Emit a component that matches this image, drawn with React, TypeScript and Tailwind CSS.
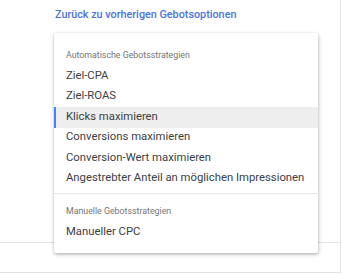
import React from "react";

const items = [
  "Ziel-CPA",
  "Ziel-ROAS",
  "Klicks maximieren",
  "Conversions maximieren",
  "Conversion-Wert maximieren",
  "Angestrebter Anteil an möglichen Impressionen",
];

export default function App() {
  return (
    <div
      className="relative w-[341px] h-[273px] bg-white border-r border-b border-[#e3e3e3] overflow-hidden"
      style={{ fontFamily: "Roboto, 'Liberation Sans', sans-serif" }}
    >
      <div className="pl-[55px] pt-[7px] text-[10.8px] leading-[16px] font-medium text-[#4a73e0]">
        Zurück zu vorherigen Gebotsoptionen
      </div>
      <div className="mt-[219px] border-t border-[#e3e3e3]" />

      <div className="absolute left-[54px] top-[33px] w-[264px] bg-white rounded-[2px] shadow-[0_1px_3px_rgba(0,0,0,0.25),1px_2px_5px_rgba(0,0,0,0.12)]">
        <div className="pt-[15px] pb-[2px]">
          <div className="pl-[12px] h-[14px] leading-[14px] text-[8.8px] text-[#757575]">
            Automatische Gebotsstrategien
          </div>
          <div className="mt-[4px]">
            {items.map((t, i) => (
              <div
                key={t}
                className={
                  i === 2
                    ? "h-[20.5px] flex items-center pl-[10px] text-[11.3px] text-[#3c4043] bg-[#eeeeee] border-l-2 border-[#4285f4]"
                    : "h-[20.5px] flex items-center pl-[12px] text-[11.3px] text-[#3c4043]"
                }
              >
                {t}
              </div>
            ))}
          </div>
        </div>
        <div className="mt-[2px] border-t border-[#e6e6e6]" />
        <div className="pt-[10px] pb-[10px]">
          <div className="pl-[12px] h-[14px] leading-[14px] text-[8.8px] text-[#757575]">
            Manuelle Gebotsstrategien
          </div>
          <div className="mt-[4px] h-[20.5px] flex items-center pl-[12px] text-[11.3px] text-[#3c4043]">
            Manueller CPC
          </div>
        </div>
      </div>
    </div>
  );
}
